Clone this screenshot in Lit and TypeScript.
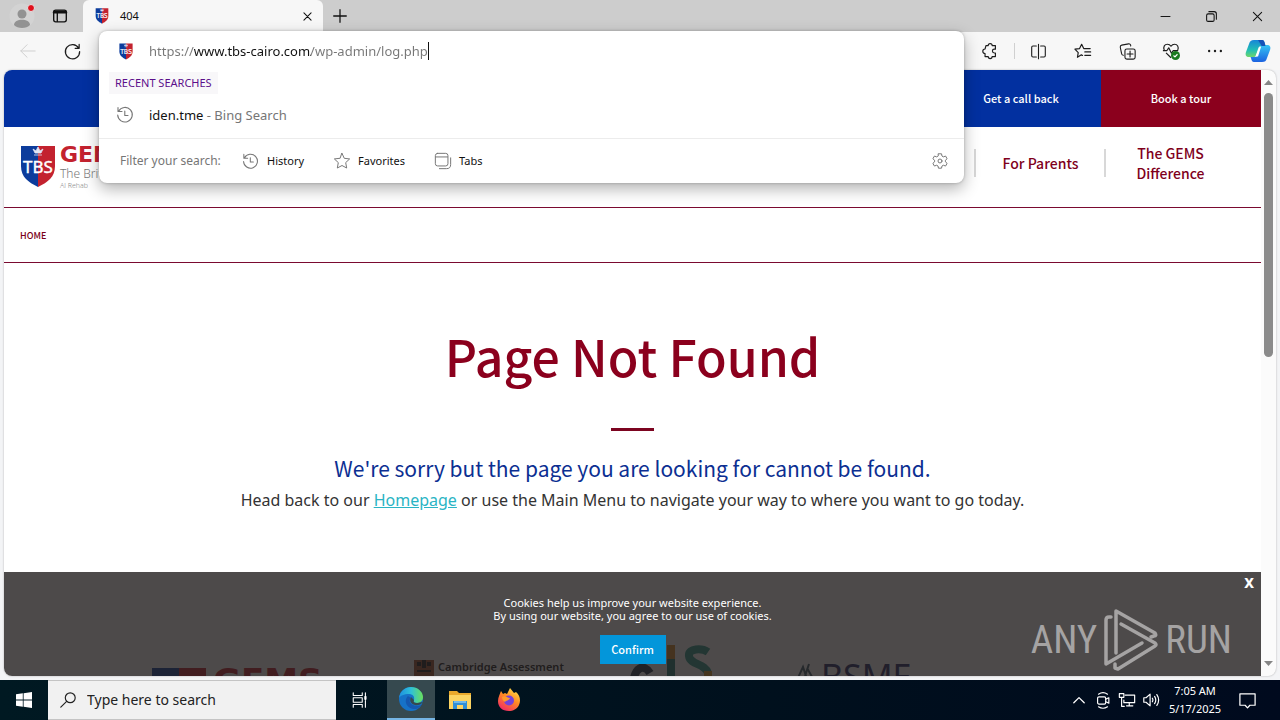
import { LitElement, html, css, svg } from "lit";
import { customElement } from "lit/decorators.js";

const line = (size: number, body: unknown, width = 1.1) => html`
  <svg width=${size} height=${size} viewBox="0 0 20 20" fill="none" stroke="currentColor"
    stroke-width=${width} stroke-linecap="round" stroke-linejoin="round" aria-hidden="true">${body}</svg>`;

const icons = {
  workspaces: svg`<rect x="3" y="3.500" width="14" height="13" rx="2.200"/><path d="M3 6h14M3.500 5h13" stroke-width="2.200"/><path d="M7 6v10"/>`,
  back: svg`<path d="M18 10H2M9 3l-7 7 7 7"/>`,
  reload: svg`<path d="M16.500 6.500A7.500 7.500 0 1 0 17.500 10M17 2.500v4.200h-4.200"/>`,
  close: svg`<path d="M4.500 4.500l11 11M15.500 4.500l-11 11"/>`,
  plus: svg`<path d="M10 3v14M3 10h14"/>`,
  minimise: svg`<path d="M4 10h12"/>`,
  restore: svg`<rect x="3.500" y="6.500" width="10" height="10" rx="2"/><path d="M6.500 3.500h7a3 3 0 0 1 3 3v7"/>`,
  puzzle: svg`<path d="M5.500 4H8a2.200 2.200 0 0 1 4.400 0H16v4h-1.200a2.100 2.100 0 0 0 0 4.200H16v4h-3.600a2.200 2.200 0 0 1-4.400 0H4.500v-3.400a2.200 2.200 0 0 1 0-5z"/>`,
  split: svg`<path d="M7.500 3.500h-4a1.500 1.500 0 0 0-1.500 1.500v10a1.500 1.500 0 0 0 1.500 1.500h4M12.500 3.500h4a1.500 1.500 0 0 1 1.500 1.500v10a1.500 1.500 0 0 1-1.500 1.500h-4M10 1.500v17"/>`,
  favourites: svg`<path d="M9.500 15l-1.300-.7-4.400 2.700.9-5.100L1 8l5.200-.7L8.500 2.500 10.800 7.300H18M12 11h6.500M12 14.800h6.500"/>`,
  collections: svg`<rect x="7" y="7" width="12" height="12" rx="2.200"/><path d="M13 9.500v7M9.500 13h7M5 14.500a2.600 2.600 0 0 1-2-2.200L1.500 5A2.200 2.200 0 0 1 3.200 2.500l8-1.500a2.200 2.200 0 0 1 2.600 2.500"/>`,
  more: svg`<g fill="currentColor" stroke="none"><circle cx="3.500" cy="10" r="1.300"/><circle cx="10" cy="10" r="1.300"/><circle cx="16.500" cy="10" r="1.300"/></g>`,
  history: svg`<path d="M3.600 6.200A7.300 7.300 0 1 1 2.700 10M3 2.500v4h4M9.800 6v4.500h3.200"/>`,
  star: svg`<path d="M10 1.500l2.500 5.500 6 .7-4.400 4.100 1.100 6L10 15l-5.200 2.800 1.100-6L1.500 7.700l6-.7z"/>`,
  tabs: svg`<rect x="1.500" y="1.500" width="14" height="14" rx="2.500"/><path d="M2 5.500h13M6 18.500h8a4.500 4.500 0 0 0 4.500-4.500V6.500"/>`,
  gear: svg`<circle cx="10" cy="10" r="2.200"/><path d="M8.300 2h3.400l.5 2.500 1.500.9 2.500-.9 1.700 3-1.900 1.700v1.700l1.900 1.700-1.700 3-2.500-.9-1.500.9-.5 2.400H8.300l-.5-2.400-1.500-.9-2.500.9-1.700-3L4 10.900V9.200L2.100 7.500l1.700-3 2.500.9 1.500-.9z"/>`,
  search: svg`<circle cx="12.500" cy="7.500" r="5.500"/><path d="M8.500 11.500L2 18"/>`,
  taskview: svg`<path d="M2.500 2v3h10V2M2.500 18v-3h10v3M2.500 7.500h10v5h-10zM16 2v3M16 10.500V18"/><path d="M16 6.500v2.500" stroke-width="2.500"/>`,
  chevron: svg`<path d="M3.500 13.500L10 7l6.500 6.500"/>`,
  meet: svg`<rect x="4" y="6.500" width="9" height="8" rx="1.500"/><path d="M13 9l3.500-1.500v6L13 12M5 3.500c3-2 7-2 10 0M5 17.500c3 2 7 2 10 0"/>`,
  network: svg`<path d="M8 4.500h10.500v8.500H6.500V10M9.500 16.500h7M12.500 13v3.500M1.500 3h5v4h-5zM4 7v10h3"/>`,
  volume: svg`<path d="M2 7.500h2.500L9 3.500v13L4.500 12.500H2zM11.500 8q1.200 2 0 4M14 6q2.600 4 0 8M16.500 4q4 6 0 12"/>`,
  note: svg`<path d="M2 3h16v12h-5.500L10 17.800 7.500 15H2z"/>`,
};

const shield = (w: number, h: number) => html`
  <svg width=${w} height=${h} viewBox="0 0 36 43" aria-hidden="true">
    <path d="M1 1h17v41C8 37 1 32 1 21z" fill="#0c3c9c"/>
    <path d="M18 1h17v20c0 11-7 16-17 21z" fill="#c3222f"/>
    <path d="M13 4l2 4h6l2-4-3 2-2-4-2 4zM14 10h8" fill="#dfe5f5" stroke="#dfe5f5" stroke-width=".8"/>
    <text x="18" y="28" text-anchor="middle" font-family="Noto Sans, sans-serif" font-size="17" fill="#fff" stroke="#fff" stroke-width=".4">TBS</text>
  </svg>`;

@customElement("browser-tabs")
class BrowserTabs extends LitElement {
  static styles = css`
    :host { display: flex; align-items: stretch; height: 32px; background: #cdcdcd; }
    button { border: 0; background: none; padding: 0; display: grid; place-items: center; color: #111; width: 46px; }
    .profile { width: 44px; }
    .spaces { width: 32px; }
    .tab { display: flex; align-items: center; width: 240px; margin-left: 7px; padding-left: 12px; box-sizing: border-box;
      background: #f7f7f7; border-radius: 6px 6px 0 0; font: 11px/16px "Noto Sans", sans-serif; color: #111; }
    .tab span { flex: 1; padding-left: 11px; }
    .tab button { width: 32px; height: 32px; }
    .new { width: 34px; }
    .window { margin-left: auto; display: flex; }
  `;
  render() {
    return html`
      <button class="profile" aria-label="Profile">
        <svg width="26" height="28" viewBox="0 0 26 28"><circle cx="13" cy="14" r="12.500" fill="#d3d3d3"/>
          <circle cx="13" cy="12" r="4.500" fill="#929292"/><path d="M5 23c0-7 16-7 16 0-3 4-13 4-16 0z" fill="#929292"/>
          <circle cx="22" cy="6" r="3.500" fill="#e0101c" stroke="#e4e4e4"/></svg>
      </button>
      <button class="spaces" aria-label="Workspaces">${line(18, icons.workspaces, 1.5)}</button>
      <div class="tab">${shield(14, 16)}<span>404</span><button aria-label="Close tab">${line(13, icons.close, 1.6)}</button></div>
      <button class="new" aria-label="New tab">${line(18, icons.plus, 1.4)}</button>
      <div class="window">
        <button aria-label="Minimise">${line(15, icons.minimise, 1.3)}</button>
        <button aria-label="Restore">${line(15, icons.restore, 1.4)}</button>
        <button aria-label="Close window">${line(15, icons.close, 1.4)}</button>
      </div>`;
  }
}

@customElement("browser-toolbar")
class BrowserToolbar extends LitElement {
  static styles = css`
    :host { display: flex; align-items: center; height: 38px; background: #f7f7f7; }
    button { border: 0; background: none; padding: 0; display: grid; place-items: center; color: #1d1d1d; width: 44px; height: 38px; }
    .back { color: #cfcfcf; width: 56px; }
    .reload { width: 32px; }
    .actions { margin-left: auto; display: flex; align-items: center; }
    .ext { width: 42px; }
    .rule { width: 1px; height: 16px; background: #d0d0d0; margin-left: 3px; }
    .split { width: 46px; }
    .copilot { width: 43px; padding-right: 1px; }
  `;
  render() {
    return html`
      <button class="back" aria-label="Back">${line(18, icons.back)}</button>
      <button class="reload" aria-label="Reload">${line(19, icons.reload, 1.3)}</button>
      <div class="actions">
        <button class="ext" aria-label="Extensions">${line(18, icons.puzzle, 1.3)}</button>
        <span class="rule"></span>
        <button class="split" aria-label="Split screen">${line(17, icons.split, 1.3)}</button>
        <button aria-label="Favorites">${line(18, icons.favourites, 1.3)}</button>
        <button aria-label="Collections">${line(17, icons.collections, 1.3)}</button>
        <button aria-label="Browser essentials">
          <svg width="18" height="18" viewBox="0 0 20 20" fill="none" stroke="#1d1d1d" stroke-width="1.300" stroke-linejoin="round">
            <path d="M2.500 9C1 5 3 2.500 6 2.500c2 0 3.200 1 4 2.200.8-1.200 2-2.200 4-2.200 3 0 5 3 3.500 6.500M4.500 12L10 17.500M1 9.500h4.500L7.500 6.500l3 6 2-3H18"/>
            <circle cx="15" cy="15" r="5" fill="#1a7a1f" stroke="none"/><path d="M12.800 15l1.600 1.600 2.800-3" stroke="#fff"/></svg>
        </button>
        <button aria-label="More">${line(18, icons.more)}</button>
        <button class="copilot" aria-label="Copilot">
          <svg width="26" height="26" viewBox="0 0 26 26">
            <defs><linearGradient id="a" x1="0" y1="0" x2="0" y2="1"><stop offset="0" stop-color="#1785d8"/><stop offset=".6" stop-color="#22c0b4"/><stop offset="1" stop-color="#6fd66a"/></linearGradient>
            <linearGradient id="b" x1="0" y1="0" x2="0" y2="1"><stop offset="0" stop-color="#35c4f4"/><stop offset="1" stop-color="#1b62e0"/></linearGradient></defs>
            <path d="M9 2h8c2 0 2.500 2 3 4l.5 2h-4c-2 0-3 1-3.500 3l-2 6c-.5 1.500-1 2-2.500 2H4c-3 0-4-2-3-5L4 6c1-3 2-4 5-4z" fill="url(#a)"/>
            <path d="M17 24H9c-2 0-2.500-2-3-4l-.5-1h4c2 0 3-1 3.500-3l2-6c.5-1.500 1-3 2.500-3H22c3 0 4 2 3 5l-3 8c-1 3-2 4-5 4z" fill="url(#b)"/>
            <path d="M13 2h4c2 0 2.500 2 3 4l.5 2h-4l-1-2z" fill="#1552b8"/>
            <path d="M14.500 9l-4 9.500h2.500l3-9.500z" fill="#fff"/></svg>
        </button>
      </div>`;
  }
}

@customElement("address-panel")
class AddressPanel extends LitElement {
  static styles = css`
    :host { display: block; box-sizing: border-box; background: #fff; border-radius: 8px; color: #111;
      font: 13px/20px "Noto Sans", sans-serif; box-shadow: 0 6px 16px rgba(0,0,0,.3), 0 0 3px rgba(0,0,0,.25); }
    .url { display: flex; align-items: center; height: 40px; padding-left: 20px; }
    label { display: grid; width: 30px; }
    input { field-sizing: content; border: 0; outline: 0; padding: 0; font: inherit; color: transparent;
      background: linear-gradient(90deg, #767676 45px, #111 45px 162px, #767676 162px);
      -webkit-background-clip: text; background-clip: text; }
    .caret { width: 1px; height: 18px; background: #111; }
    .chip { display: inline-block; margin: 1px 0 0 10px; padding: 0 6px; background: #f8f7f9; color: #5c0f8b;
      font-size: 11px; line-height: 22px; vertical-align: top; }
    .hit { display: flex; align-items: center; height: 42px; padding: 0 0 2px 16px; color: #767676; gap: 14px; text-decoration: none; }
    .hit b { font-weight: 400; color: #111; }
    .filters { display: flex; align-items: center; height: 44px; border-top: 1px solid #ececec; padding: 0 15px 0 21px; }
    .filters > span { color: #767676; font-size: 12px; width: 121px; }
    button { display: flex; align-items: center; gap: 7px; border: 0; background: none; padding: 0; font: 11px/16px "Noto Sans", sans-serif;
      color: #111; margin-right: 29px; }
    svg { color: #767676; }
    .gear { margin: 0 0 0 auto; }
  `;
  render() {
    return html`
      <div class="url"><label for="url" aria-label="Address">${shield(14, 17)}</label>
        <input id="url" value="https://www.tbs-cairo.com/wp-admin/log.php" spellcheck="false"><span class="caret"></span></div>
      <span class="chip">RECENT SEARCHES</span>
      <a class="hit" href="#">${line(20, icons.history)}<span><b>iden.tme</b> - Bing Search</span></a>
      <div class="filters"><span>Filter your search:</span>
        <button>${line(19, icons.history)}History</button>
        <button>${line(18, icons.star)}Favorites</button>
        <button>${line(18, icons.tabs)}Tabs</button>
        <button class="gear" aria-label="Settings">${line(18, icons.gear)}</button></div>`;
  }
}

@customElement("school-page")
class SchoolPage extends LitElement {
  static styles = css`
    :host { display: flex; flex-direction: column; position: relative; overflow: hidden; background: #fff;
      font-family: "Noto Sans CJK SC", "Noto Sans", sans-serif; color: #333; }
    a { text-decoration: none; color: inherit; }
    .top { display: flex; justify-content: flex-end; height: 57px; flex: none; background: #0230a0; color: #fff; font: 500 11px/56px "Noto Sans CJK SC", sans-serif; text-align: center; }
    .top a { width: 160px; }
    .tour { background: #8b001d; }
    header { display: flex; align-items: center; justify-content: space-between; height: 80px; flex: none; border-bottom: 1px solid #7a0a30; padding: 0 26px 0 16px; }
    .logo { display: flex; gap: 4px; white-space: nowrap; }
    .logo strong { display: block; font: 700 22px/20px "DejaVu Sans", sans-serif; color: #c3222f; }
    .logo span { display: block; font: 300 12px/17px "Noto Sans", sans-serif; color: #777; }
    .logo small { display: block; font: 300 7px/7px "Noto Sans", sans-serif; color: #888; }
    nav { display: flex; align-items: center; padding-bottom: 8px; }
    nav a { display: flex; align-items: center; justify-content: center; width: 129px; height: 28px; border-left: 2px solid #d8d8d8; margin-left: -1px;
      color: #80001c; font-weight: 500; font-size: 14px; line-height: 20px; text-align: center; }
    .crumb { height: 54px; flex: none; border-bottom: 1px solid #7a0a30; padding-left: 16px; color: #7a0019; font: 500 9px/55px "Noto Sans CJK SC", sans-serif; }
    main { flex: none; text-align: center; height: 393px; box-sizing: border-box; padding-top: 56px; }
    h1 { margin: 0; font-weight: 500; font-size: 50px; line-height: 72px; color: #8b001d; }
    hr { width: 43px; height: 3px; border: 0; margin: 37px auto 25px; background: #7c0420; }
    h2 { margin: 0; font-weight: 400; font-size: 21px; line-height: 25px; color: #0c2f92; }
    p { margin: 0; }
    main p { font: 16px/24px "Noto Sans", sans-serif; padding-top: 7px; }
    main p a { color: #2ab4c4; text-decoration: underline; }
    .partners { display: flex; align-items: flex-start; padding: 0 148px; margin-top: -1px; flex: none; }
    .gems { display: flex; gap: 7px; padding-top: 13px; width: 262px; font: 700 34px/26px "DejaVu Sans", sans-serif; color: #c3222f; }
    .camb { display: flex; gap: 4px; width: 214px; padding-top: 5px; font: 600 11px/14px "Noto Sans", sans-serif; color: #222; }
    .cis { width: 167px; }
    .cis svg { display: block; margin-top: -10px; }
    .bsme { font: 34px/32px "Noto Sans", sans-serif; color: #242a66; display: flex; padding-top: 5px; }
    .cookies { position: absolute; inset: auto 0 0 0; height: 104px; box-sizing: border-box; padding-top: 24px; text-align: center; color: #fff;
      background: rgba(32,29,29,.8); font: 11px/13px "Noto Sans", sans-serif; }
    .ok { margin-top: 13px; width: 66px; height: 29px; border: 0; padding: 0; background: #0396da; color: #fff; font: 500 11px/27px "Noto Sans CJK SC", sans-serif; }
    .shut { position: absolute; top: 1px; right: 6px; border: 0; background: none; color: #fff; padding: 0; font: 800 14px/20px "Noto Sans", sans-serif; width: 12px; }
  `;
  render() {
    return html`
      <div class="top"><a href="#">Get a call back</a><a class="tour" href="#">Book a tour</a></div>
      <header>
        <a class="logo" href="#">${shield(36, 43)}<div><strong>GEMS</strong><span>The British School</span><small>Al Rehab</small></div></a>
        <nav><a href="#">For Parents</a><a href="#"><span>The GEMS<br>Difference</span></a></nav>
      </header>
      <a class="crumb" href="#">HOME</a>
      <main>
        <h1>Page Not Found</h1>
        <hr>
        <h2>We're sorry but the page you are looking for cannot be found.</h2>
        <p>Head back to our <a href="#">Homepage</a> or use the Main Menu to navigate your way to where you want to go today.</p>
      </main>
      <div class="partners">
        <div class="gems"><svg width="54" height="30"><path d="M0 0h27v30H0z" fill="#0c3c9c"/><path d="M27 0h27v30H27z" fill="#c3222f"/></svg>GEMS</div>
        <div class="camb"><svg width="20" height="22" viewBox="0 0 20 22"><path d="M0 0h20v22H0z" fill="#a0522d"/><path d="M3 2h4v4H3zM13 2h4v4h-4zM8 0h4v8H8zM3 10h14v2H3z" fill="#222"/></svg><span>Cambridge Assessment<br>International Education</span></div>
        <div class="cis"><svg width="86" height="40" viewBox="0 0 86 40" fill="none" stroke-width="8">
          <path d="M22 28C16 18 6 22 5 40" stroke="#263a4a"/><path d="M43 0v14" stroke="#d88d28"/><path d="M43 14v26" stroke="#1e7d72"/>
          <path d="M80 7c-6-4-20-4-19 4 1 9 16 7 19 17" stroke="#2d9c8b"/><path d="M80 26v14" stroke="#d89b28"/></svg></div>
        <div class="bsme"><svg width="26" height="30" viewBox="0 0 26 30" fill="none" stroke="#3c5a68" stroke-width="2"><path d="M2 20L8 7l4 12M12 8l8 14M10 16l4-12"/></svg>BSME</div>
      </div>
      <section class="cookies">
        <p>Cookies help us improve your website experience.<br>By using our website, you agree to our use of cookies.</p>
        <button class="ok">Confirm</button>
        <button class="shut" aria-label="Close">X</button>
      </section>`;
  }
}

@customElement("task-bar")
class TaskBar extends LitElement {
  static styles = css`
    :host { display: flex; align-items: stretch; height: 40px; background: linear-gradient(90deg, #001922, #00101d 60%, #000a1e); color: #fff; }
    button { border: 0; background: none; padding: 0; display: grid; place-items: center; color: inherit; width: 49px; }
    .start { width: 48px; }
    .search { display: flex; align-items: center; gap: 10px; width: 288px; box-sizing: border-box; padding-left: 11px; background: #f1f1f1; border: 1px solid #c4c4c4; border-width: 1px 0; color: #222; }
    input { border: 0; outline: 0; padding: 0; background: none; min-width: 0; flex: 1; font: 14px/20px "Noto Sans", sans-serif; }
    input::placeholder { color: #222; opacity: 1; }
    .view { width: 51px; padding-right: 4px; }
    .active { width: 48px; background: #36494f; border-bottom: 2px solid #76b5e4; }
    .tray { margin-left: auto; display: flex; align-items: center; }
    .tray button { width: 24px; height: 40px; }
    .tray .time { width: 64px; font: 11px/18px "Noto Sans", sans-serif; text-align: center; align-content: center; }
    .tray .note { width: 40px; margin-right: 13px; }
  `;
  render() {
    return html`
      <button class="start" aria-label="Start"><svg width="16" height="16" viewBox="0 0 16 16" fill="#fff"><path d="M0 2.200L6.800 1.300v6.300H0zM7.600 1.200L16 0v7.600H7.600zM0 8.400h6.800v6.300L0 13.800zM7.600 8.400H16V16l-8.400-1.200z"/></svg></button>
      <label class="search">${line(18, icons.search, 1.3)}<input placeholder="Type here to search" aria-label="Type here to search"></label>
      <button class="view" aria-label="Task view">${line(18, icons.taskview, 1.2)}</button>
      <button class="active" aria-label="Edge"><svg width="24" height="24" viewBox="0 0 24 24">
        <defs><linearGradient id="e" x1="0" x2="1"><stop offset="0" stop-color="#1d8fe0"/><stop offset=".5" stop-color="#2fc0d8"/><stop offset="1" stop-color="#6be05a"/></linearGradient></defs>
        <circle cx="12" cy="12" r="12" fill="#1672c8"/>
        <path d="M0 11C1 4 6 0 12 0c7 0 12 5 12 10 0 4-3 6-6 6-3 0-4-1-3-3 1-4-2-6-5-6C5 7 1 9 0 11z" fill="url(#e)"/>
        <path d="M9 9c-5 5-1 13 7 13 3 0 5-2 7-5-2 2-6 3-9 1-4-2-4-5-2-7z" fill="#1558b0"/>
        <path d="M12 10c-2 4 0 7 4 8 3 1 6-1 7-2l1-1v3l-4 4-1 2h5v-9l-6 1c-3 0-4-1-3-3z" fill="#36494f"/></svg></button>
      <button aria-label="File Explorer"><svg width="22" height="20" viewBox="0 0 22 20"><path d="M0 1h8l2 2h12v16H0z" fill="#e9a92c"/><path d="M0 5h22v14H0z" fill="#fbd462"/><path d="M4 11h14v8h-4v-4H8v4H4z" fill="#2f8fd6"/><path d="M5 11h12v2H5z" fill="#6fb9ea"/></svg></button>
      <button aria-label="Firefox"><svg width="24" height="24" viewBox="0 0 24 24">
        <defs><linearGradient id="f" x1=".8" y1="0" x2=".2" y2="1"><stop offset="0" stop-color="#ffe14a"/><stop offset=".45" stop-color="#ff8a22"/><stop offset="1" stop-color="#f0246a"/></linearGradient></defs>
        <path d="M4 3l2 3 2-1 2 1 3-6 4 5 2-1c4 3 5 9 3 13-2 4-6 6-10 6C5 23 1 19 1 13 1 9 3 6 4 3z" fill="url(#f)"/>
        <circle cx="12" cy="12.500" r="5" fill="#7442d8"/><path d="M5 9c3-2 5 1 8 1-1 3-4 2-5 4-2-1-3-3-3-5z" fill="#ff9a2a"/></svg></button>
      <div class="tray">
        <button aria-label="Hidden icons">${line(16, icons.chevron, 1.6)}</button>
        <button aria-label="Meet now">${line(18, icons.meet, 1.3)}</button>
        <button aria-label="Network">${line(18, icons.network, 1.3)}</button>
        <button aria-label="Volume">${line(18, icons.volume, 1.3)}</button>
        <button class="time">7:05 AM<br>5/17/2025</button>
        <button class="note" aria-label="Notifications">${line(19, icons.note, 1.3)}</button>
      </div>`;
  }
}

@customElement("app-root")
class AppRoot extends LitElement {
  static styles = css`
    :host { display: flex; flex-direction: column; height: 100vh; position: relative; overflow: hidden; background: #f3f4f6; }
    address-panel { position: absolute; left: 99px; right: 316px; top: 31px; z-index: 2; }
    .frame { flex: 1; min-height: 0; display: flex; margin: 0 4px 4px; border-radius: 8px; overflow: hidden; background: #fbfbfb; box-shadow: 0 0 2px rgba(0,0,0,.3); }
    school-page { flex: 1; min-width: 0; }
    .scroll { width: 15px; display: flex; flex-direction: column; align-items: center; padding: 10px 0 10px; box-sizing: border-box; color: #858585; }
    .thumb { width: 9px; height: 45%; margin-top: 8px; border-radius: 5px; background: #8b8b8b; }
    .down { margin-top: auto; }
    .mark { position: absolute; right: 48px; bottom: 48px; display: flex; align-items: center; gap: 7px; color: #a5a3a3; z-index: 3;
      font: 400 39px/64px "Roboto Condensed", "Open Sans Condensed", "Liberation Sans Narrow", "Roboto", sans-serif; }
  `;
  render() {
    return html`
      <browser-tabs></browser-tabs>
      <browser-toolbar></browser-toolbar>
      <address-panel></address-panel>
      <div class="frame">
        <school-page></school-page>
        <div class="scroll"><svg width="9" height="5"><path d="M0 5L4.500 0 9 5z" fill="currentColor"/></svg><div class="thumb"></div>
          <svg class="down" width="9" height="5"><path d="M0 0h9L4.500 5z" fill="currentColor"/></svg></div>
      </div>
      <task-bar></task-bar>
      <div class="mark"><span>ANY</span>
        <svg width="54" height="62" viewBox="0 0 54 62" fill="none" stroke="#a5a3a3" stroke-width="3.500" stroke-linejoin="round" stroke-linecap="round">
          <path d="M7 8H5q-3 0-3 3v44l36-21"/><path d="M12 44V2l39 22q2 3-1 3l-3 1"/><path d="M11 55v4l3 1 37-23q2-1 0-3L17 15"/></svg>
        <span>RUN</span></div>`;
  }
}
